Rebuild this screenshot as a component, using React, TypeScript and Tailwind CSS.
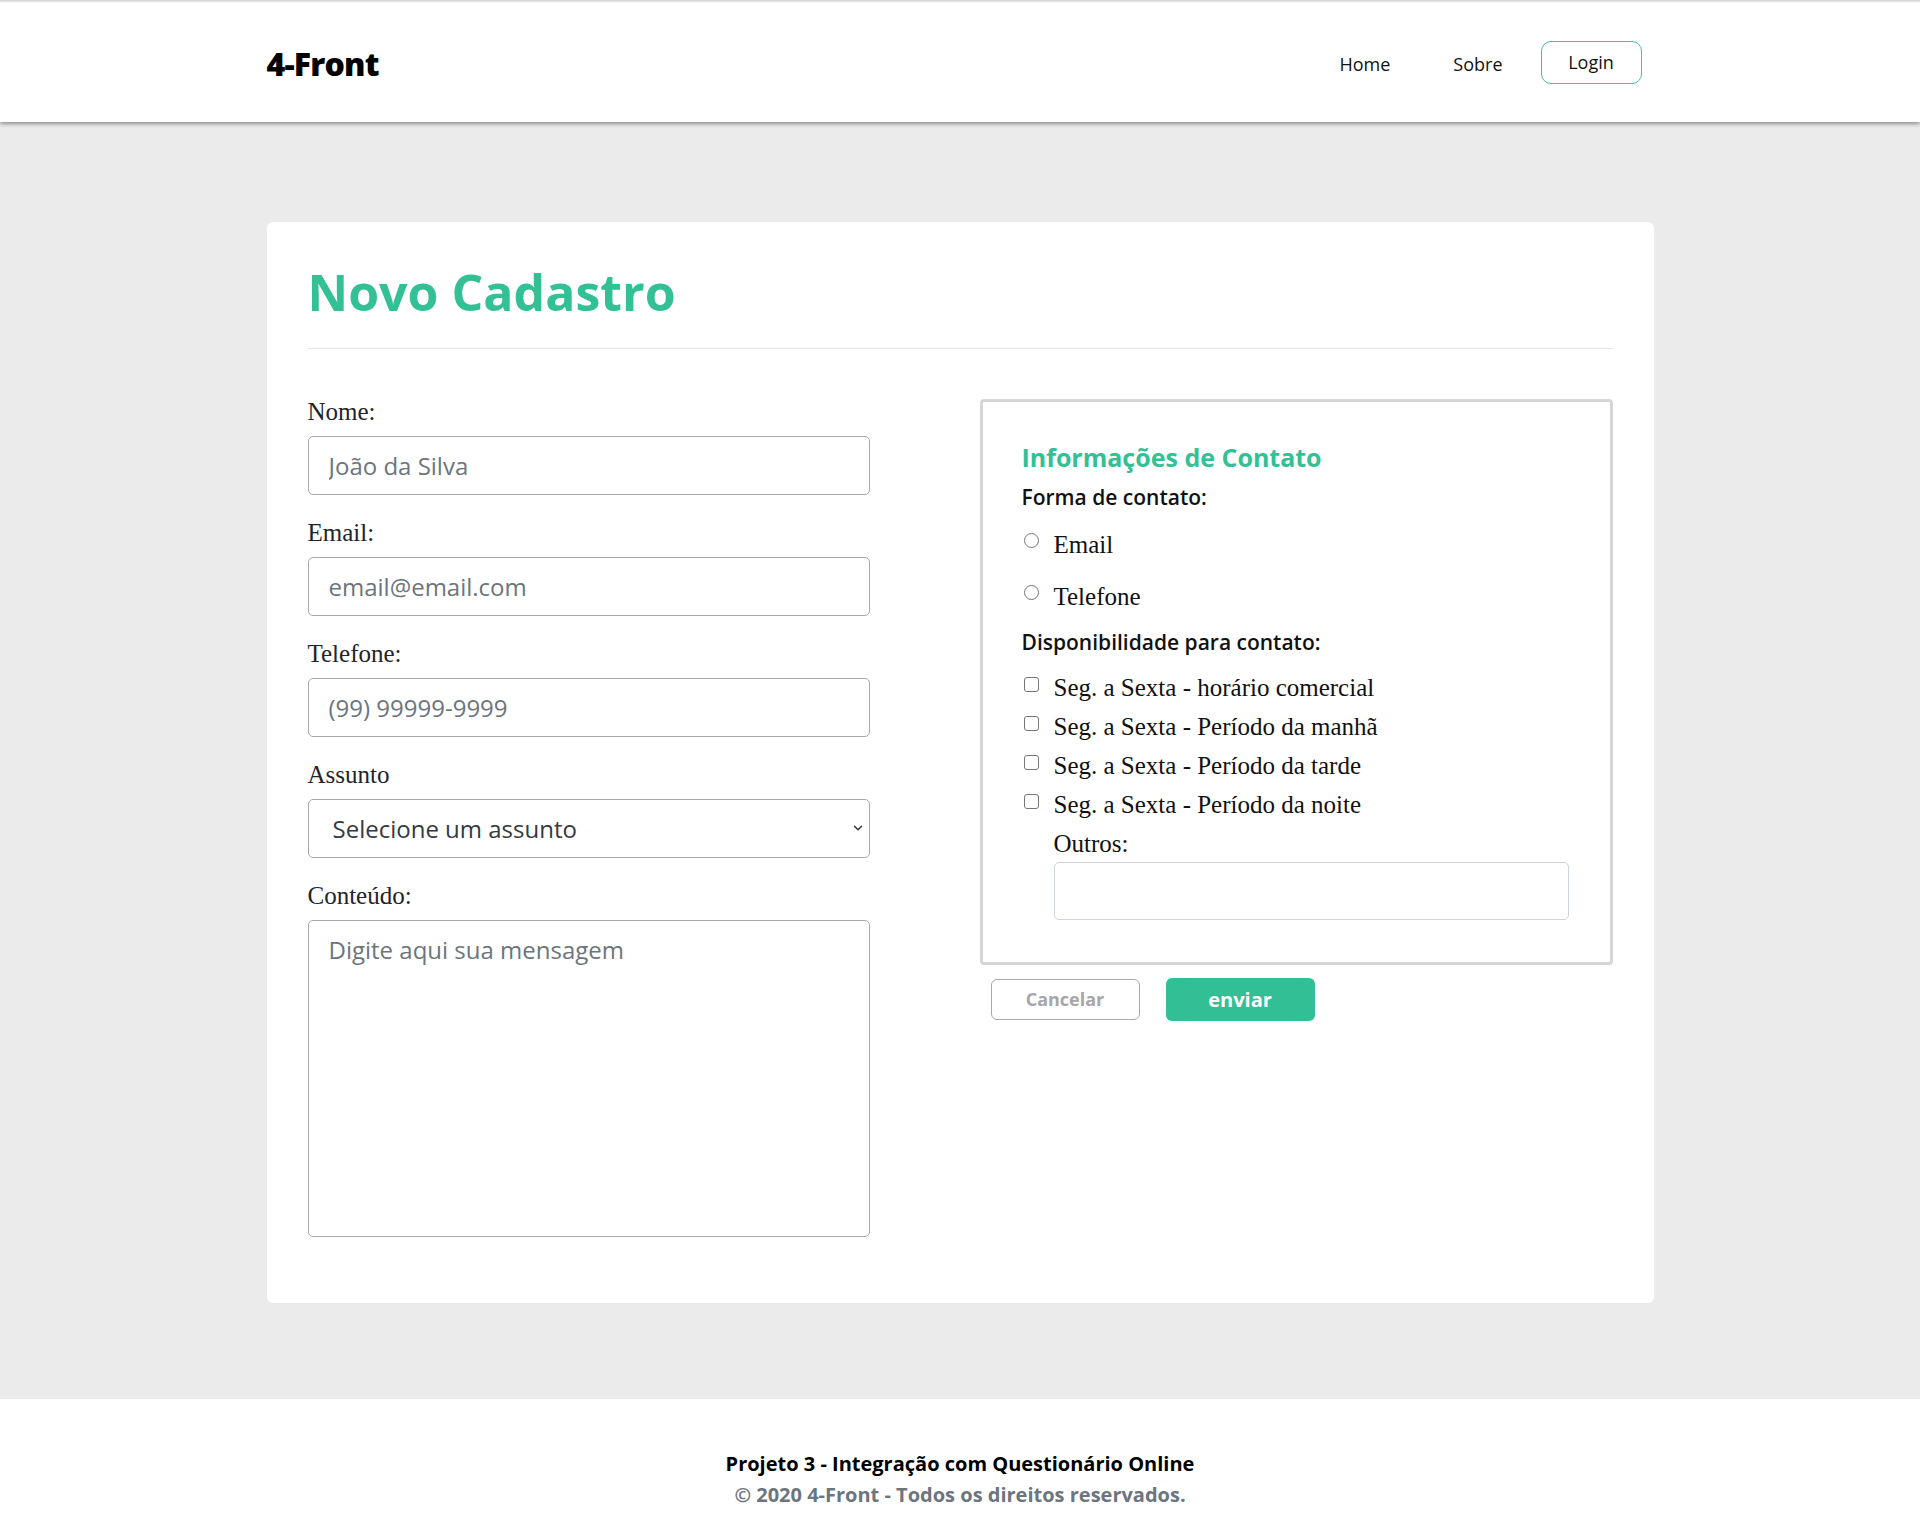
import { ChevronDown } from 'lucide-react';

const sans = { fontFamily: '"Open Sans", "Noto Sans", sans-serif' };
const serif = { fontFamily: '"Liberation Serif", "Times New Roman", serif' };

const teal = 'text-[#33c095]';

const Field = ({ label, first, children }: { label: string; first?: boolean; children: React.ReactNode }) => (
  <div className={first ? '' : 'mt-[25px]'}>
    <label style={serif} className="block text-[25px] leading-[26px] text-[#212529] mb-[11px]">
      {label}
    </label>
    {children}
  </div>
);

const inputCls =
  'block w-full h-[59px] rounded-[5px] border border-[#a9a9a9] bg-white px-[20px] text-[24px] text-[#343a40] placeholder:text-[#6c757d] outline-none';

const App = () => {
  const horarios = [
    'Seg. a Sexta - horário comercial',
    'Seg. a Sexta - Período da manhã',
    'Seg. a Sexta - Período da tarde',
    'Seg. a Sexta - Período da noite',
  ];

  return (
    <div style={sans} className="min-h-[1527px] flex flex-col bg-white">
      {/* Header */}
      <header className="relative z-10 bg-white shadow-[0_2px_4px_rgba(0,0,0,0.4)]">
        <div className="h-[3px] bg-linear-to-b from-[#cfcfcf] to-white" />
        <div className="w-[1387px] mx-auto h-[119px] flex items-center justify-between pr-[12px]">
          <span className="text-[32px] font-extrabold text-black tracking-[-0.8px] mt-[2px]">4-Front</span>
          <nav className="flex items-center text-[18px] text-[#111]">
            <a className="mt-[3px]">Home</a>
            <a className="ml-[63px] mt-[3px]">Sobre</a>
            <button className="ml-[38px] w-[101px] h-[43px] rounded-[10px] border border-[#45c29c] text-[18px]">
              Login
            </button>
          </nav>
        </div>
      </header>

      {/* Main */}
      <main className="bg-[#ebebeb] pt-[100px] pb-[96px]">
        <div className="w-[1387px] mx-auto bg-white rounded-[6px] pt-[40px] px-[41px] pb-[66px]">
          <h1 className={`text-[50px] leading-[60px] font-bold ${teal} pb-[26px] border-b border-[#e3e3e3]`}>
            Novo Cadastro
          </h1>

          <div className="flex mt-[50px]">
            {/* Left column */}
            <div className="w-[562px]">
              <Field label="Nome:" first>
                <input className={inputCls} placeholder="João da Silva" />
              </Field>
              <Field label="Email:">
                <input className={inputCls} placeholder="email@email.com" />
              </Field>
              <Field label="Telefone:">
                <input className={inputCls} placeholder="(99) 99999-9999" />
              </Field>
              <Field label="Assunto">
                <div className="relative">
                  <select
                    defaultValue=""
                    className="block w-full h-[59px] appearance-none rounded-[5px] border border-[#a9a9a9] bg-white pl-[24px] text-[24px] text-[#343a40] outline-none"
                  >
                    <option value="">Selecione um assunto</option>
                  </select>
                  <ChevronDown
                    className="pointer-events-none absolute right-[5px] top-[22px] text-[#333]"
                    size={14}
                    strokeWidth={2.5}
                  />
                </div>
              </Field>
              <Field label="Conteúdo:">
                <textarea
                  className="block w-full h-[317px] resize-none rounded-[5px] border border-[#a9a9a9] bg-white px-[20px] pt-[11px] pb-[12px] text-[24px] text-[#343a40] placeholder:text-[#6c757d] outline-none"
                  placeholder="Digite aqui sua mensagem"
                />
              </Field>
            </div>

            {/* Right column */}
            <div className="ml-auto w-[633px]">
              <div className="border-[3px] border-[#d6d6d6] rounded-[4px] pt-[39px] pl-[39px] pr-[41px] pb-[42px]">
                <h3 className={`text-[25px] leading-[32px] font-bold ${teal}`}>Informações de Contato</h3>
                <p className="mt-[10px] text-[21px] leading-[28px] font-semibold text-[#111]">Forma de contato:</p>

                {['Email', 'Telefone'].map((opt, i) => (
                  <label
                    key={opt}
                    style={serif}
                    className={`flex items-center h-[30px] text-[25px] text-[#111] ${i === 0 ? 'mt-[19px]' : 'mt-[22px]'}`}
                  >
                    <span className="w-[15px] h-[15px] rounded-full border border-[#767676] bg-white mb-[9px] ml-[2px] shrink-0" />
                    <span className="ml-[15px]">{opt}</span>
                  </label>
                ))}

                <p className="mt-[16px] text-[21px] leading-[28px] font-semibold text-[#111]">
                  Disponibilidade para contato:
                </p>

                <div className="mt-[12px]">
                  {horarios.map(h => (
                    <label key={h} style={serif} className="flex items-center h-[39px] text-[25px] text-[#111]">
                      <span className="w-[15px] h-[15px] rounded-[3px] border border-[#767676] bg-white mb-[7px] ml-[2px] shrink-0" />
                      <span className="ml-[15px]">{h}</span>
                    </label>
                  ))}
                </div>

                <div className="pl-[32px] mt-[5px]">
                  <label style={serif} className="block text-[25px] leading-[30px] text-[#111]">
                    Outros:
                  </label>
                  <input className="block mt-[3px] w-[515px] h-[58px] rounded-[5px] border border-[#ced4da] bg-white outline-none" />
                </div>
              </div>

              <div className="flex gap-[26px] mt-[14px] ml-[11px]">
                <button className="w-[149px] h-[41px] rounded-[6px] border border-[#a8a8a8] bg-white text-[18px] font-bold text-[#a6a6a6]">
                  Cancelar
                </button>
                <button className="w-[149px] h-[43px] -mt-[1px] rounded-[6px] bg-[#32bf96] text-[20px] font-bold text-white">
                  enviar
                </button>
              </div>
            </div>
          </div>
        </div>
      </main>

      {/* Footer */}
      <footer className="bg-white h-[129px] pt-[49px] text-center">
        <p className="text-[20px] leading-[31px] font-bold text-black">
          Projeto 3 - Integração com Questionário Online
        </p>
        <p className="text-[20px] leading-[31px] font-bold text-[#6c757d]">
          © 2020 4-Front - Todos os direitos reservados.
        </p>
      </footer>
    </div>
  );
};

export default App;
